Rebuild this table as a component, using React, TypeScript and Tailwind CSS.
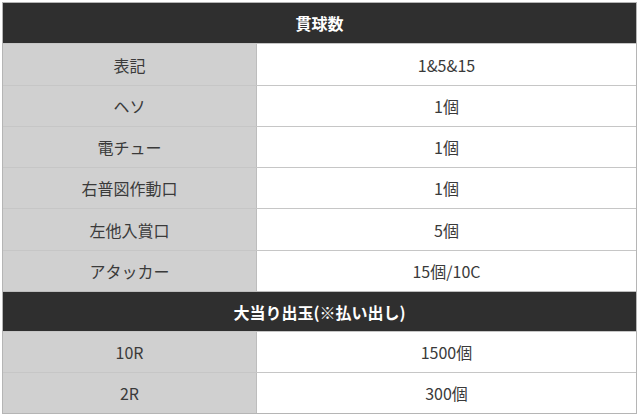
import React from "react";

interface Row {
  label: string;
  value: string;
  tall?: boolean;
}

const tableA: Row[] = [
  { label: "表記", value: "1&5&15", tall: true },
  { label: "ヘソ", value: "1個" },
  { label: "電チュー", value: "1個" },
  { label: "右普図作動口", value: "1個" },
  { label: "左他入賞口", value: "5個", tall: true },
  { label: "アタッカー", value: "15個/10C" },
];

const tableB: Row[] = [
  { label: "10R", value: "1500個" },
  { label: "2R", value: "300個" },
];

const Header = ({ title, first = false }: { title: string; first?: boolean }) => (
  <div
    className={`h-[40px] flex items-center justify-center bg-[#2f2f2f] text-white font-bold text-[16px] ${
      first ? "" : "border-t border-[#bdbdbd]"
    }`}
  >
    {title}
  </div>
);

const DataRow = ({ label, value, tall }: Row) => (
  <div className={`flex border-t border-[#c6c6c6] ${tall ? "h-[42px]" : "h-[41px]"}`}>
    <div className="w-[254px] flex items-center justify-center bg-[#d0d0d0] border-r border-[#bdbdbd]">
      {label}
    </div>
    <div className="flex-1 flex items-center justify-center bg-white">{value}</div>
  </div>
);

export default function App() {
  return (
    <div
      className="w-[640px] h-[417px] bg-white pt-[2px] pl-[2px] text-[#3a3a3a] text-[16px]"
      style={{ fontFamily: '"Noto Sans CJK JP", "Noto Sans", sans-serif' }}
    >
      <div className="w-[635px] border border-[#b5b5b5] flex flex-col">
        <Header title="貫球数" first />
        {tableA.map((r) => (
          <DataRow key={r.label} {...r} />
        ))}
        <Header title="大当り出玉(※払い出し)" />
        {tableB.map((r) => (
          <DataRow key={r.label} {...r} />
        ))}
      </div>
    </div>
  );
}
